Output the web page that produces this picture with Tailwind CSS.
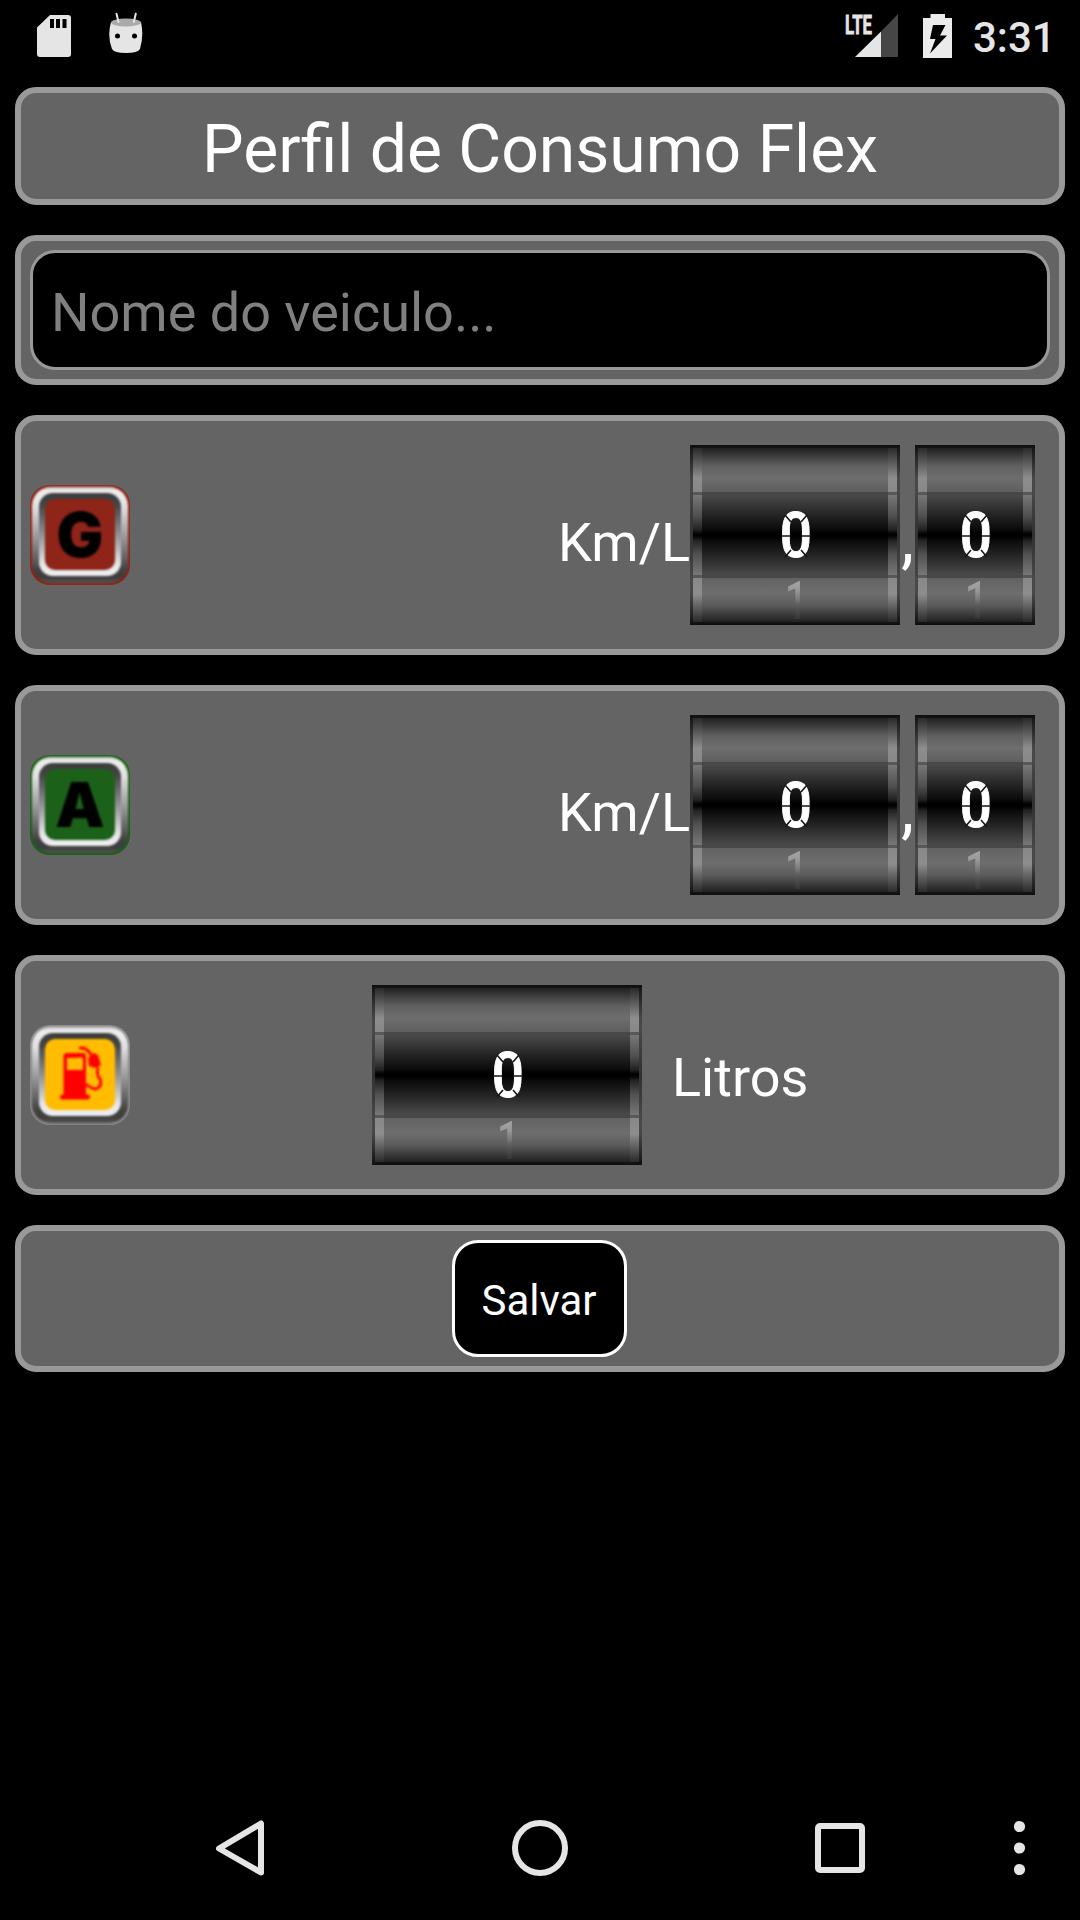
<!DOCTYPE html>
<html lang="pt">
<head>
<meta charset="utf-8">
<title>Perfil de Consumo Flex</title>
<script src="https://cdn.jsdelivr.net/npm/@tailwindcss/browser@4"></script>
</head>
<body class="bg-black">
<div class="w-[1080px] h-[1920px] bg-black flex flex-col overflow-hidden font-['Roboto',sans-serif] text-white">

  <!-- Status bar -->
  <header class="h-[72px] shrink-0 flex items-start pl-[37px] pr-[27px]">
    <svg class="w-[34px] h-[42px] mt-[15px]" viewBox="0 0 34 42"><path fill="#e5e5e5" d="M13 0H31Q34 0 34 3V39Q34 42 31 42H3Q0 42 0 39V12.500Z"/><path d="M13 4h4v9h-4zM19 4h4v9h-4zM25.500 4h4v9h-4z"/></svg>
    <svg class="w-[36px] h-[42px] mt-[12px] ml-[37px]" viewBox="0 0 36 42"><path fill="#e5e5e5" d="M3 10Q18 5 33 10Q36 24 32 37Q30 41 18 41Q6 41 4 37Q-1 24 3 10Z"/><ellipse cx="18" cy="10.500" rx="15" ry="4" fill="#aaa"/><path d="M8.500 1.800L10.500 10M27.800 1.800L25.800 10" stroke="#e5e5e5" stroke-width="2" stroke-linecap="round"/><circle cx="9.500" cy="24" r="2.500"/><circle cx="26.500" cy="24" r="2.500"/></svg>
    <div class="grow"></div>
    <svg class="w-[64px] h-[58px] overflow-visible" viewBox="-10 -14 64 58"><path fill="#464646" d="M54 0V43H37V17.500Z"/><path fill="#e5e5e5" d="M11 43L37 17.500V43Z"/><text x="1" y="19.500" font-size="26" font-weight="700" fill="#e5e5e5" stroke="#e5e5e5" stroke-width="0.800" textLength="27" lengthAdjust="spacingAndGlyphs">LTE</text></svg>
    <svg class="w-[29px] h-[44px] mt-[14px] ml-[25px]" viewBox="0 0 29 44"><path fill="#ebebeb" d="M7.500 0H22V4H29V44H0V4H7.500Z"/><path d="M10 11H22.500L17 21.500H24L7 39.500L12.500 25H7Z"/></svg>
    <div class="text-[42px] leading-[48px] font-medium text-[#e5e5e5] mt-[14px] ml-[21px] w-[80px]">3:31</div>
  </header>

  <main class="px-[15px] pt-[15px] flex flex-col gap-[30px] grow">
    <h1 class="h-[118px] rounded-[21px] border-6 border-[#999] bg-[#646464] flex items-center justify-center text-[66px] leading-[77px] pt-[7px]">Perfil de Consumo Flex</h1>

    <section class="h-[150px] rounded-[21px] border-6 border-[#999] bg-[#646464] p-[9px] flex">
      <div class="grow rounded-[25px] border-3 border-[#999] bg-black flex items-center pl-[18px] pt-[4px] text-[54px] text-[#808080]">Nome do veiculo...</div>
    </section>

    <section class="h-[240px] rounded-[21px] border-6 border-[#999] bg-[#646464] flex items-center pl-[9px] pr-[24px]">
      <div data-badge="G" data-color="#8f2419"></div>
      <div class="grow"></div>
      <span class="text-[54px] mt-[15px]">Km/L</span>
      <div data-wheel="210"></div>
      <span class="text-[66px] mt-[7px] w-[15px] pl-px">,</span>
      <div data-wheel="120"></div>
    </section>

    <section class="h-[240px] rounded-[21px] border-6 border-[#999] bg-[#646464] flex items-center pl-[9px] pr-[24px]">
      <div data-badge="A" data-color="#1c6119"></div>
      <div class="grow"></div>
      <span class="text-[54px] mt-[15px]">Km/L</span>
      <div data-wheel="210"></div>
      <span class="text-[66px] mt-[7px] w-[15px] pl-px">,</span>
      <div data-wheel="120"></div>
    </section>

    <section class="h-[240px] rounded-[21px] border-6 border-[#999] bg-[#646464] flex items-center pl-[9px]">
      <div data-badge="pump" data-color="#ffbc00"></div>
      <div class="w-[242px]"></div>
      <div data-wheel="270"></div>
      <span class="text-[54px] ml-[30px] mt-[4px]">Litros</span>
    </section>

    <section class="h-[147px] rounded-[21px] border-6 border-[#999] bg-[#646464] py-[9px] pr-[2px] flex justify-center">
      <button class="w-[175px] h-[117px] rounded-[26px] border-3 border-white bg-black text-[42px] pt-[4px]">Salvar</button>
    </section>
  </main>

  <!-- Navigation bar -->
  <nav class="h-[144px] shrink-0 flex items-center pl-[90px] pr-[30px]">
    <div class="w-[300px] flex justify-center"><svg class="w-[48px] h-[56px]" viewBox="0 0 48 56" fill="none" stroke="#e5e5e5"><path d="M45 3.500V52.500L3 28.500Z" stroke-width="6" stroke-linejoin="round"/></svg></div>
    <div class="w-[300px] flex justify-center"><svg class="w-[56px] h-[56px]" viewBox="0 0 56 56" fill="none" stroke="#e5e5e5"><circle cx="28" cy="28" r="25" stroke-width="6"/></svg></div>
    <div class="w-[300px] flex justify-center"><div class="w-[50px] h-[50px] rounded-[5px] border-6 border-[#e5e5e5]"></div></div>
    <svg class="w-[60px] h-[60px]" viewBox="0 0 60 60" fill="#e5e5e5"><circle cx="29.500" cy="8.500" r="5.600"/><circle cx="29.500" cy="30" r="5.600"/><circle cx="29.500" cy="51.500" r="5.600"/></svg>
  </nav>
</div>

<template id="wheel">
  <div class="relative h-[180px] shrink-0 bg-[linear-gradient(#0e0e0e_0px,#1c1c1c_6px,#484848_34px,#484848_46px,#303030_90px,#484848_134px,#484848_148px,#1c1c1c_174px,#0e0e0e_180px)] px-[3px] py-[3px]">
    <div class="h-[174px] px-[9px] bg-[linear-gradient(#2a2a2a_0px,#8d8d8d_30px,#888_44px,#585858_44px,#585858_47px,#777_47px,#505050_68px,#101010_87px,#505050_106px,#777_127px,#585858_127px,#585858_130px,#888_130px,#8d8d8d_146px,#2a2a2a_174px)]">
      <div class="h-[174px] bg-[linear-gradient(#202020_0px,#606060_18px,#6e6e6e_30px,#5e5e5e_44px,#484848_44px,#484848_47px,#4a4a4a_47px,#222_68px,#000_87px,#222_106px,#4a4a4a_127px,#484848_127px,#484848_130px,#626262_130px,#6e6e6e_145px,#5c5c5c_157px,#202020_174px)]"></div>
    </div>
    <div class="absolute inset-x-0 top-[85px] h-[10px] bg-linear-to-b from-transparent via-black to-transparent mx-[3px]"></div>
    <div class="absolute left-[2px] right-0 top-[60px] flex justify-center text-[63px] leading-[62px] font-medium [-webkit-text-stroke:1px_white]"><span class="scale-x-90">0</span></div>
    <svg class="absolute left-1/2 -ml-[14px] top-[67px] w-[30px] h-[48px]" viewBox="0 0 30 48" stroke="#161616" stroke-width="1.600"><path d="M4 3L10 10M26 3L20 10M4 45L10 38M26 45L20 38M0 24H9M21 24H30"/></svg>
    <!-- Next value, fading around the drum -->
    <div class="absolute left-[2px] right-0 top-[133px] h-[46px] flex justify-center"><span class="text-[54px] leading-[46px] h-[46px] font-medium scale-x-75 text-transparent bg-clip-text bg-[linear-gradient(#aaa_0px,#999_12px,#777_22px,#606060_26px,#484848_34px,#282828_46px)]">1</span></div>
  </div>
</template>

<template id="badge">
  <div class="w-[100px] h-[100px] shrink-0 rounded-[20px] p-[2px] overflow-hidden">
    <div class="h-[96px] rounded-[19px] p-[7px] pt-[6px] bg-[linear-gradient(#c8c8c8_0px,#efefef_4px,#e0e0e0_20px,#999_50px,#444_82px,#3c3c3c_90px,#555_96px)] blur-[0.800px]">
      <div class="h-[83px] rounded-[14px] p-[6px] bg-[linear-gradient(#3c3c3c_0px,#444_12px,#999_45px,#e8e8e8_72px,#eee_83px)]">
        <div data-face class="h-[71px] rounded-[10px] flex items-center justify-center font-['Inter',sans-serif] font-black text-[62px] leading-[70px] text-black pt-px"></div>
      </div>
    </div>
  </div>
</template>

<template id="pump">
  <svg class="w-[70px] h-[70px]" viewBox="0 0 70 70" fill="none" stroke="red"><path fill="red" fill-rule="evenodd" stroke="none" d="M18.500 16Q18.500 13 22 13H38Q41 13 41 16V54.500H43Q45 54.500 45 57T43 59.500H17Q15 59.500 15 57T17 54.500H18.500ZM22.500 18Q22 18 22 19V30H38V19Q38 17.500 37 17.500Z"/><path d="M35.500 8Q41 7.500 44 12L47 16" stroke-width="3" stroke-linecap="round"/><path fill="red" stroke="none" d="M43 18L49 13L53 15L56 25L50 28L44 26Z"/><path d="M53 27Q51 35 55 39Q58 46 51 49Q46 49 41 44" stroke-width="2.800"/></svg>
</template>

<script>
  document.querySelectorAll('[data-wheel]').forEach(el => {
    const w = document.getElementById('wheel').content.firstElementChild.cloneNode(true);
    w.style.width = el.dataset.wheel + 'px';
    el.replaceWith(w);
  });
  document.querySelectorAll('[data-badge]').forEach(el => {
    const b = document.getElementById('badge').content.firstElementChild.cloneNode(true);
    const kind = el.dataset.badge, face = b.querySelector('[data-face]');
    b.style.backgroundColor = kind === 'pump' ? '#888' : el.dataset.color;
    face.style.backgroundColor = el.dataset.color;
    if (kind === 'pump') face.append(document.getElementById('pump').content.cloneNode(true));
    else face.textContent = kind;
    el.replaceWith(b);
  });
</script>
</body>
</html>
